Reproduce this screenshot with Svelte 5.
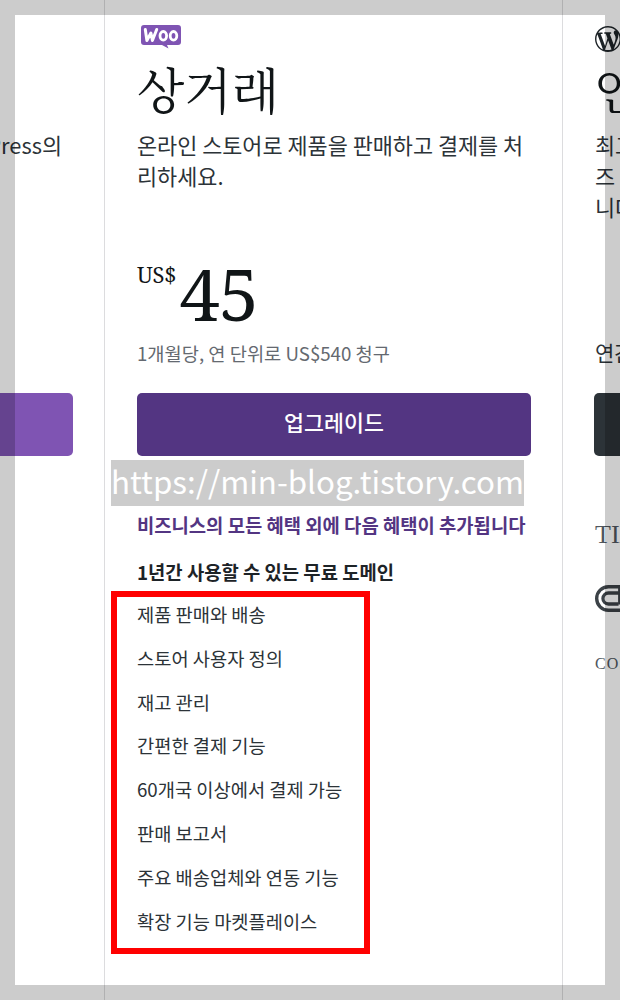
<script>
  const features = ['제품 판매와 배송','스토어 사용자 정의','재고 관리','간편한 결제 기능','60개국 이상에서 결제 가능','판매 보고서','주요 배송업체와 연동 기능','확장 기능 마켓플레이스'];
</script>

<div class="page">
  <div class="track">
    <section class="col">
      <div class="logo-slot"></div>
      <h2 class="title">&nbsp;</h2>
      <p class="desc"><span class="left-desc">WordPress의</span></p>
      <div class="price-block"></div>
      <div class="note">&nbsp;</div>
      <div class="btn btn-light"></div>
    </section>

    <section class="col">
      <div class="logo-slot">
        <svg class="woo" viewBox="0 0 40 24" width="40" height="24" aria-hidden="true">
          <path fill="#7f54b3" d="M3 0h34a3 3 0 0 1 3 3v14a3 3 0 0 1-3 3H26l1.500 3.600L21 20H3a3 3 0 0 1-3-3V3a3 3 0 0 1 3-3z"/>
          <path fill="none" stroke="#fff" stroke-width="3" stroke-linejoin="round" stroke-linecap="round" d="M4.300 4.500l1.600 11 4-7.500 1.500 7.500 4.300-11"/>
          <ellipse cx="22.300" cy="10.800" rx="3.300" ry="4.300" fill="none" stroke="#fff" stroke-width="2.800"/>
          <ellipse cx="32.500" cy="10.800" rx="3.300" ry="4.300" fill="none" stroke="#fff" stroke-width="2.800"/>
        </svg>
      </div>
      <h2 class="title">상거래</h2>
      <p class="desc">온라인 스토어로 제품을 판매하고 결제를 처리하세요.</p>
      <div class="price-block">
        <span class="currency">US$</span><span class="amount">45</span>
      </div>
      <div class="note">1개월당, 연 단위로 US$540 청구</div>
      <div class="btn btn-dark">업그레이드</div>
      <div class="spacer"></div>
      <div class="plus">비즈니스의 모든 혜택 외에 다음 혜택이 추가됩니다</div>
      <div class="domain">1년간 사용할 수 있는 무료 도메인</div>
      <ul class="features">
        {#each features as f}<li>{f}</li>{/each}
      </ul>
    </section>

    <section class="col">
      <div class="logo-slot">
        <svg class="wp" viewBox="0 0 20 20" width="26" height="26" aria-hidden="true">
          <path fill="#1d2327" d="M20 10c0-5.510-4.490-10-10-10C4.480 0 0 4.490 0 10c0 5.520 4.480 10 10 10 5.510 0 10-4.480 10-10zM7.780 15.370L4.370 6.220c.55-.02 1.170-.08 1.170-.08.5-.06.44-1.130-.06-1.110 0 0-1.450.11-2.370.11-.18 0-.37 0-.58-.01C4.120 2.690 6.890 1.100 10 1.100c2.320 0 4.430.88 6.010 2.340-.67-.11-1.620.38-1.620 1.540 0 .72.43 1.330.89 2.050.35.61.55 1.360.55 2.460 0 1.490-1.400 5-1.400 5l-3.030-8.350c.54-.02.82-.17.82-.17.5-.05.44-1.250-.06-1.220 0 0-1.440.12-2.380.12-.87 0-2.330-.12-2.330-.12-.5-.03-.56 1.200-.06 1.220l.92.08 1.260 3.410zM17.410 10c.24-.64.74-1.870.43-4.250.7 1.290 1.050 2.710 1.050 4.250 0 3.290-1.730 6.240-4.480 7.820.99-2.650 1.990-5.170 3-7.820zM6.100 18.090C3.120 16.650 1.100 13.530 1.100 10c0-1.300.23-2.480.72-3.590C3.250 10.320 4.670 14.220 6.100 18.090zm4.030-6.980l2.580 6.980c-.87.29-1.790.45-2.710.45-.79 0-1.540-.11-2.300-.34z"/>
        </svg>
      </div>
      <h2 class="title">안</h2>
      <p class="desc">최고의<br>즈&nbsp;&nbsp;기능<br>니다</p>
      <div class="price-block"></div>
      <div class="note note-dark">연간</div>
      <div class="btn btn-black"></div>
      <div class="brand-text">TIAA</div>
      <svg class="cnn" viewBox="0 0 50 32" width="42" height="27" aria-hidden="true">
        <path fill="none" stroke="#3c4247" stroke-width="4" d="M30 2H16a14 14 0 0 0 0 28h30M30 9.500H16a6.500 6.500 0 0 0 0 13h12"/>
        <path fill="none" stroke="#3c4247" stroke-width="3" d="M29 23V2"/>
      </svg>
      <div class="brand-small">COSMO</div>
    </section>
  </div>

  <div class="mark">https://min-blog.tistory.com</div>
  <div class="redbox"></div>
  <div class="frame"></div>
</div>

<style>
  :global(body) { margin: 0; background: #fff; }
  .page {
    position: relative;
    width: 620px;
    height: 1000px;
    overflow: hidden;
    background: #fff;
    font-family: "Noto Sans CJK KR", "Noto Sans", sans-serif;
    color: #1d2327;
  }
  .track {
    display: flex;
    width: 1374px;
    height: 1000px;
    margin-left: -353px;
  }
  .col {
    flex: 0 0 458px;
    box-sizing: border-box;
    height: 1000px;
    padding: 0 31px 0 32px;
    border-right: 1px solid #dcdcde;
  }
  .col:nth-child(3) { border-right: 0; }
  .logo-slot { height: 56px; padding-top: 25px; box-sizing: border-box; display: flex; align-items: flex-start; }
  .woo { margin-left: 4px; }
  .wp { margin-top: 1px; margin-left: 0; }
  .title {
    margin: 0;
    height: 69px;
    font: 400 49px/65px "Noto Serif CJK KR", "Liberation Serif", "Noto Sans CJK KR", serif;
    color: #101517;
  }
  .desc {
    margin: 4px 0 0;
    height: 113px;
    font-size: 21.850px;
    line-height: 31px;
    color: #2c3338;
  }
  .left-desc { display: block; text-align: right; padding-right: 11px; white-space: nowrap; }
  .price-block { height: 80px; display: flex; align-items: flex-start; margin-top: 19px; }
  .currency {
    font: 400 22px/24px "Noto Serif", "DejaVu Serif", "Liberation Serif", serif;
    letter-spacing: -0.2px;
    color: #101517;
    margin-top: 1px;
  }
  .amount {
    font: 400 72px/72px "Noto Serif", "DejaVu Serif", "Liberation Serif", serif;
    color: #101517;
    margin-left: 3px;
    margin-top: -4px;
    letter-spacing: -1px;
  }
  .note { height: 52px; font-size: 18.700px; line-height: 24px; color: #646970; }
  .note-dark { font-size: 21px; line-height: 28px; color: #2c3338; margin-top: -3px; height: 55px; }
  .btn { height: 63px; border-radius: 5px; }
  .btn-light { background: #7f54b3; margin-left: -32px; }
  .btn-dark {
    background: #533582;
    color: #fff;
    text-align: center;
    font-size: 21.700px;
    font-weight: 500;
    line-height: 58px;
  }
  .btn-black { background: #2c3338; margin-left: -1px; }
  .spacer { height: 57px; }
  .plus { font-size: 18.800px; font-weight: 700; line-height: 24px; color: #533582; white-space: nowrap; }
  .domain { margin-top: 23px; font-size: 18.800px; font-weight: 700; line-height: 24px; color: #1d2327; }
  .features { list-style: none; margin: 9px 0 0; padding: 0; font-size: 18.700px; line-height: 24px; color: #2c3338; }
  .features li { height: 43.800px; padding-top: 9px; box-sizing: border-box; white-space: nowrap; }
  .brand-text { margin-top: 63px; font: 400 26px/32px "Liberation Serif", serif; color: #50575e; }
  .cnn { display: block; margin-top: 34px; }
  .brand-small { margin-top: 42px; font: 400 16px/20px "Liberation Serif", serif; color: #50575e; letter-spacing: 1px; }
  .mark {
    position: absolute;
    left: 111px;
    top: 460px;
    width: 413px;
    height: 46px;
    background: #ccc;
    color: #fff;
    font: 400 31.300px/42px "Noto Sans CJK KR", sans-serif;
    text-align: center;
    white-space: nowrap;
    overflow: hidden;
  }
  .redbox {
    position: absolute;
    left: 111px;
    top: 591px;
    width: 259px;
    height: 363px;
    box-sizing: border-box;
    border: 6px solid #f00;
  }
  .frame {
    position: absolute;
    inset: 0;
    border: 15px solid rgba(0, 0, 0, 0.2);
    pointer-events: none;
  }
</style>
